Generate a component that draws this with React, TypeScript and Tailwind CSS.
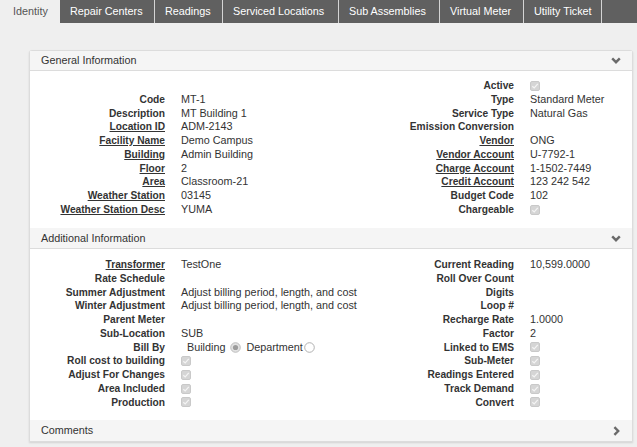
import React from "react";

type Cell = { label?: string; link?: boolean; value?: React.ReactNode };

const Check = () => (
  <svg width="10" height="10" viewBox="0 0 10 10" className="block">
    <rect x="0.5" y="0.5" width="9" height="9" rx="1.5" fill="#d5d5d5" stroke="#c9c9c9" />
    <path d="M2.3 5.2 L4.2 7 L7.8 2.9" fill="none" stroke="#f4f4f4" strokeWidth="1.2" />
  </svg>
);

const Radio = ({ on }: { on?: boolean }) => (
  <svg width="11" height="11" viewBox="0 0 11 11" className="block">
    <circle cx="5.5" cy="5.5" r="4.8" fill={on ? "#e2e2e2" : "#ffffff"} stroke={on ? "#b8b8b8" : "#a8a8a8"} strokeWidth="0.9" />
    {on && <circle cx="5.5" cy="5.5" r="2.6" fill="#9c9c9c" />}
  </svg>
);

const ChevronDown = () => (
  <svg width="10" height="7" viewBox="0 0 10 7" className="block">
    <polyline points="1.2,1.4 5,5.2 8.8,1.4" fill="none" stroke="#6a6a6a" strokeWidth="2.4" />
  </svg>
);

const ChevronRight = () => (
  <svg width="7" height="10" viewBox="0 0 7 10" className="block">
    <polyline points="1.4,1.2 5.2,5 1.4,8.8" fill="none" stroke="#6a6a6a" strokeWidth="2.4" />
  </svg>
);

const tabs: { name: string; w: string }[] = [
  { name: "Repair Centers", w: "w-[95px]" },
  { name: "Readings", w: "w-[68px]" },
  { name: "Serviced Locations", w: "w-[116px]" },
  { name: "Sub Assemblies", w: "w-[101px]" },
  { name: "Virtual Meter", w: "w-[84px]" },
  { name: "Utility Ticket", w: "w-[78px]" },
];

const Label = ({ c }: { c: Cell }) => (
  <div className="text-right whitespace-nowrap text-[10.2px] font-bold text-[#333]">
    {c.label ? <span className={c.link ? "underline underline-offset-[1px]" : ""}>{c.label}</span> : null}
  </div>
);

const Value = ({ c }: { c: Cell }) => (
  <div className="pl-4 whitespace-nowrap text-[10.8px] text-[#333] flex items-center">{c.value}</div>
);

const Grid = ({ left, right }: { left: Cell[]; right: Cell[] }) => (
  <div className="grid grid-cols-[135px_195px_154px_1fr] auto-rows-[13.75px] leading-[13.75px] items-center">
    {left.map((l, i) => (
      <React.Fragment key={i}>
        <Label c={l} />
        <Value c={l} />
        <Label c={right[i]} />
        <Value c={right[i]} />
      </React.Fragment>
    ))}
  </div>
);

const Header = ({ title, h }: { title: string; h: string }) => (
  <div className={`${h} bg-[#f5f5f5] border-b border-[#dcdcdc] flex items-center justify-between pl-[11px] pr-[11px] text-[10.8px] text-[#333]`}>
    <span>{title}</span>
    <ChevronDown />
  </div>
);

export default function App() {
  const general1: Cell[] = [
    {},
    { label: "Code", value: "MT-1" },
    { label: "Description", value: "MT Building 1" },
    { label: "Location ID", link: true, value: "ADM-2143" },
    { label: "Facility Name", link: true, value: "Demo Campus" },
    { label: "Building", link: true, value: "Admin Building" },
    { label: "Floor", link: true, value: "2" },
    { label: "Area", link: true, value: "Classroom-21" },
    { label: "Weather Station", link: true, value: "03145" },
    { label: "Weather Station Desc", link: true, value: "YUMA" },
  ];
  const general2: Cell[] = [
    { label: "Active", value: <Check /> },
    { label: "Type", value: "Standard Meter" },
    { label: "Service Type", value: "Natural Gas" },
    { label: "Emission Conversion" },
    { label: "Vendor", link: true, value: "ONG" },
    { label: "Vendor Account", link: true, value: "U-7792-1" },
    { label: "Charge Account", link: true, value: "1-1502-7449" },
    { label: "Credit Account", link: true, value: "123 242 542" },
    { label: "Budget Code", value: "102" },
    { label: "Chargeable", value: <Check /> },
  ];
  const add1: Cell[] = [
    { label: "Transformer", link: true, value: "TestOne" },
    { label: "Rate Schedule" },
    { label: "Summer Adjustment", value: "Adjust billing period, length, and cost" },
    { label: "Winter Adjustment", value: "Adjust billing period, length, and cost" },
    { label: "Parent Meter" },
    { label: "Sub-Location", value: "SUB" },
    {
      label: "Bill By",
      value: (
        <span className="flex items-center pl-[6px]">
          <span>Building</span>
          <span className="ml-[5px] mr-[5px]">
            <Radio on />
          </span>
          <span>Department</span>
          <span className="ml-[1px]">
            <Radio />
          </span>
        </span>
      ),
    },
    { label: "Roll cost to building", value: <Check /> },
    { label: "Adjust For Changes", value: <Check /> },
    { label: "Area Included", value: <Check /> },
    { label: "Production", value: <Check /> },
  ];
  const add2: Cell[] = [
    { label: "Current Reading", value: "10,599.0000" },
    { label: "Roll Over Count" },
    { label: "Digits" },
    { label: "Loop #" },
    { label: "Recharge Rate", value: "1.0000" },
    { label: "Factor", value: "2" },
    { label: "Linked to EMS", value: <Check /> },
    { label: "Sub-Meter", value: <Check /> },
    { label: "Readings Entered", value: <Check /> },
    { label: "Track Demand", value: <Check /> },
    { label: "Convert", value: <Check /> },
  ];

  return (
    <div className="w-[637px] h-[447px] overflow-hidden bg-[#efefef] font-['Liberation_Sans',Arial,sans-serif]">
      <div className="h-[23px] bg-[#606060] flex">
        <div className="w-[60px] h-[23px] bg-[#efefef] pl-[13px] flex items-center text-[10.8px] text-[#555]">Identity</div>
        {tabs.map((t) => (
          <div
            key={t.name}
            className={`${t.w} h-[23px] border-r border-[#d4d4d4] pl-[10px] flex items-center text-[10.8px] text-white whitespace-nowrap`}
          >
            {t.name}
          </div>
        ))}
      </div>
      <div className="mt-[27px] ml-[29px] w-[604px] border border-[#dcdcdc] rounded-t-[3px] bg-white shadow-[0_1px_2px_rgba(0,0,0,0.12)]">
        <Header title="General Information" h="h-[20px]" />
        <div className="h-[157px] pt-[8px]">
          <Grid left={general1} right={general2} />
        </div>
        <Header title="Additional Information" h="h-[21px]" />
        <div className="h-[171px] pt-[9px]">
          <Grid left={add1} right={add2} />
        </div>
        <div className="h-[21px] bg-[#f5f5f5] flex items-center justify-between pl-[11px] pr-[12px] text-[10.8px] text-[#333]">
          <span>Comments</span>
          <ChevronRight />
        </div>
      </div>
    </div>
  );
}
